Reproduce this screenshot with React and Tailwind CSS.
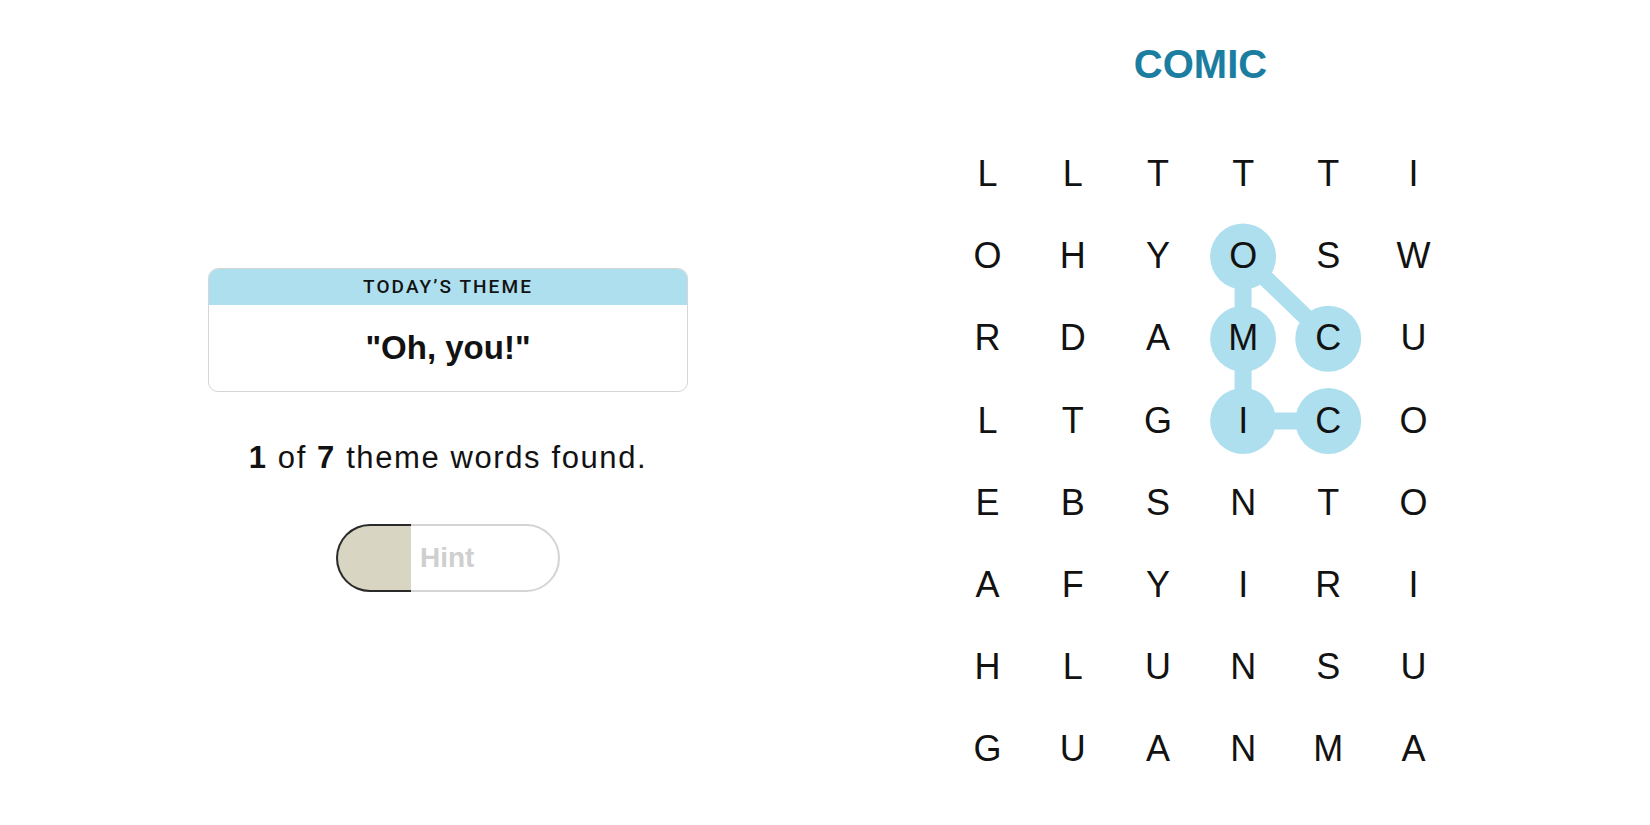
import React from "react";

const ROWS = [
  "LLTTTI",
  "OHYOSW",
  "RDAMCU",
  "LTGICO",
  "EBSNTO",
  "AFYIRI",
  "HLUNSU",
  "GUANMA",
];

const CW = 85.2;
const RH = 82.2;
const cx = (c) => CW / 2 + CW * c;
const cy = (r) => RH / 2 + RH * r;

const path = [
  [1, 3],
  [2, 3],
  [2, 4],
  [3, 3],
  [3, 4],
];
const links = [
  [[1, 3], [2, 3]],
  [[1, 3], [2, 4]],
  [[2, 3], [3, 3]],
  [[3, 3], [3, 4]],
];

export default function App() {
  return (
    <div className="flex w-full h-[825px] bg-white text-[#121212] overflow-hidden">
      <div className="w-[896px] flex flex-col items-center pt-[268px]">
        <div className="w-[480px] h-[124px] border border-[#d6d6d6] rounded-[10px] overflow-hidden flex flex-col">
          <div className="h-[36px] bg-[#aedfee] flex items-center justify-center text-[19px] tracking-[0.11em] font-medium text-[#121212] font-['Roboto',sans-serif]">
            TODAY’S THEME
          </div>
          <div className="flex-1 flex items-center justify-center text-[33px] font-bold font-['Liberation_Sans',Arial,sans-serif]">
            "Oh, you!"
          </div>
        </div>
        <div className="mt-[50px] text-[31px] leading-none tracking-[1.6px] font-['Liberation_Sans',Arial,sans-serif]">
          <span className="font-bold">1</span> of <span className="font-bold">7</span> theme words found.
        </div>
        <div className="mt-[51px] w-[224px] h-[68px] rounded-full border-2 border-[#d4d4d4] flex items-center relative">
          <div className="absolute -left-[2px] -top-[2px] -bottom-[2px] w-[75px] rounded-l-full border-2 border-r-0 border-[#2a2a2a] bg-[#d8d6c3]"></div>
          <span className="ml-[82px] text-[28px] font-bold text-[#cfcfcf] font-['Liberation_Sans',Arial,sans-serif]">
            Hint
          </span>
        </div>
      </div>
      <div className="flex-1 flex flex-col pt-[44px] pl-[49px]">
        <div className="w-[511px] text-center text-[40px] leading-none font-bold text-[#1b7ea1] font-['Liberation_Sans',Arial,sans-serif]">
          COMIC
        </div>
        <div className="relative mt-[49px] w-[511px]">
          <svg
            className="absolute inset-0"
            width="511"
            height="658"
            viewBox="0 0 511.2 657.6"
          >
            {links.map(([a, b], i) => (
              <line
                key={i}
                x1={cx(a[1])}
                y1={cy(a[0])}
                x2={cx(b[1])}
                y2={cy(b[0])}
                stroke="#aedfee"
                strokeWidth="17"
              />
            ))}
            {path.map(([r, c], i) => (
              <circle key={i} cx={cx(c)} cy={cy(r)} r="33" fill="#aedfee" />
            ))}
          </svg>
          <div className="relative grid grid-cols-[repeat(6,85.2px)] grid-rows-[repeat(8,82.2px)]">
            {ROWS.flatMap((row, r) =>
              row.split("").map((ch, c) => (
                <div
                  key={`${r}-${c}`}
                  className="flex items-center justify-center text-[36px] leading-none text-[#121212] font-['Liberation_Sans',Arial,sans-serif]"
                >
                  {ch}
                </div>
              ))
            )}
          </div>
        </div>
      </div>
    </div>
  );
}
